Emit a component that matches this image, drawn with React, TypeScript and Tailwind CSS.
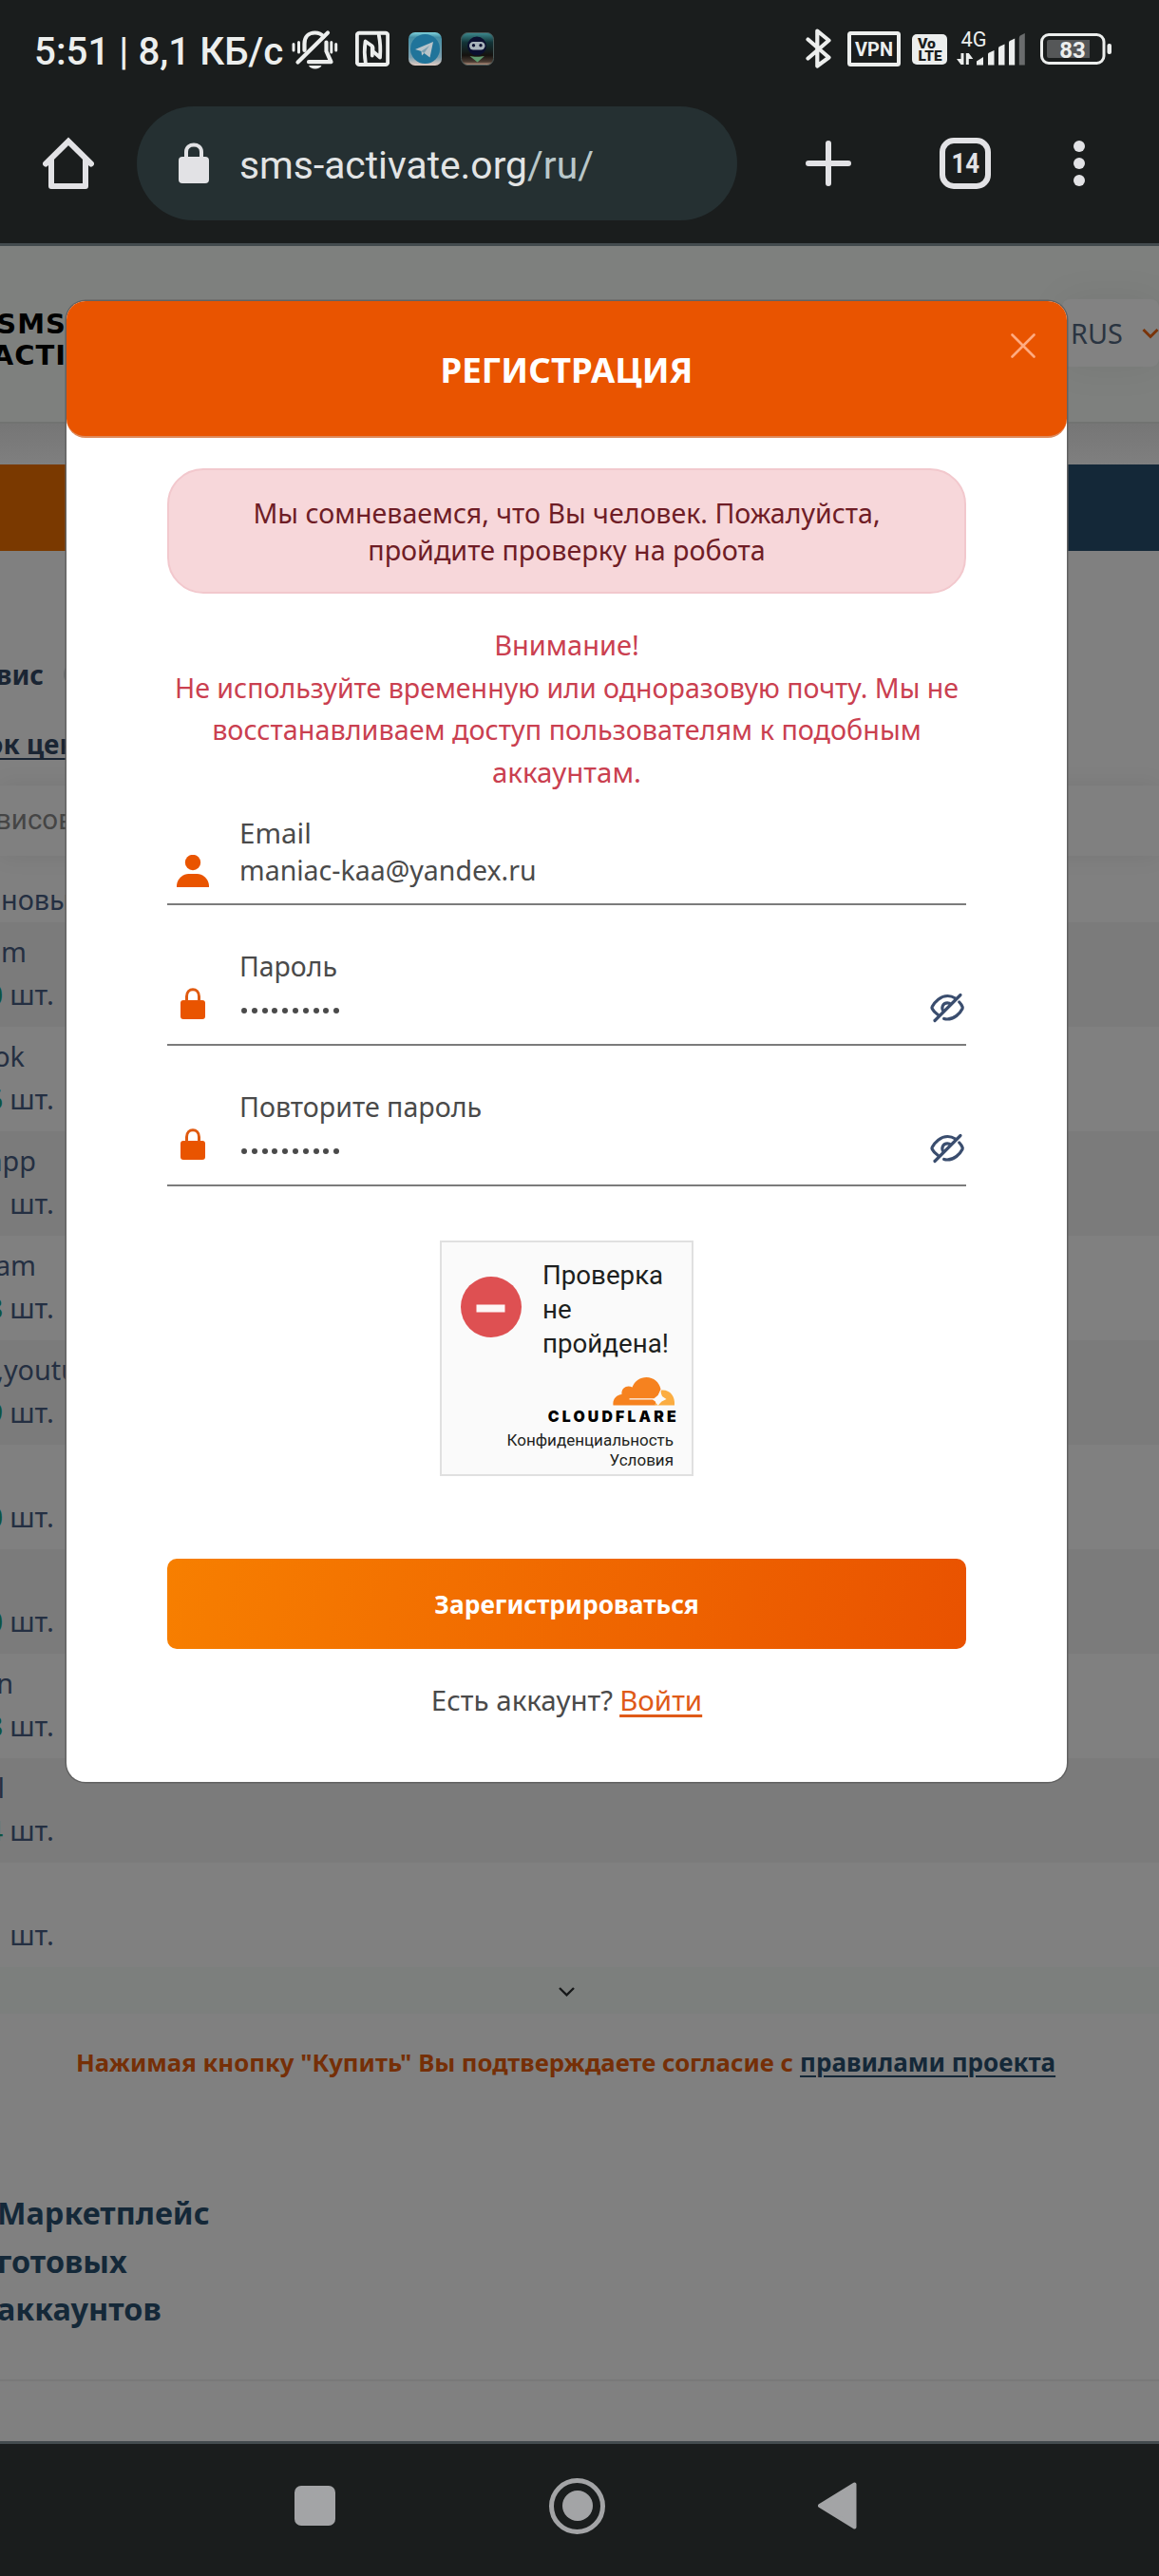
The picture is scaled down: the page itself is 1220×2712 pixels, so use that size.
import React from "react";

const noto = "font-['Noto_Sans',sans-serif]";
const roboto = "font-['Roboto',sans-serif]";

function StatusBar() {
  return (
    <div className="flex h-[104px] items-center pl-[36px] pr-[50px] text-[#eceeed]">
      <div className={`${roboto} w-[271px] whitespace-nowrap text-[40.3px] font-medium leading-[44px]`}>
        <div className="translate-y-[3px]">5:51 | 8,1 КБ/с</div>
      </div>
      <svg className="h-[44px] w-[49px]" viewBox="307 30 49 44" fill="none" stroke="#eceeed" strokeWidth="4.2" strokeLinecap="round" strokeLinejoin="round">
        <path d="M320.5 53V46C320.5 38.5 325 34.5 331.5 34.5C335.500 34.5 338.500 36 340.500 38.5" />
        <path d="M343.500 44.500V54L348.500 65.2H325" />
        <path d="M313.500 65.500L345 34.500" />
        <path d="M309 46.500V53M314.500 44.500V55M348.800 44.500V55M353.700 46.500V53" strokeWidth="3" />
        <path d="M325 69H338.500C337 73.500 326.500 73.500 325 69Z" fill="#eceeed" stroke="none" />
      </svg>
      <svg className="ml-[18px] h-[44px] w-[36px]" viewBox="374 30 36 44" fill="none" stroke="#eceeed" strokeWidth="4" strokeLinejoin="round" strokeLinecap="round">
        <rect x="375.800" y="34.800" width="32.400" height="33.200" rx="2.500" />
        <path d="M384.800 66C383.400 58 383.600 50 384.600 43.500L391.800 48.500V58.500" strokeWidth="3.800" />
        <path d="M398.800 37C400.500 45 400.600 53 400 60.500L392.500 54V50" strokeWidth="3.800" />
      </svg>
      <svg className="ml-[20px] h-[44px] w-[35px]" viewBox="430 30 35 44">
        <defs>
          <linearGradient id="tg" x1="0" y1="0" x2="0" y2="1">
            <stop offset="0" stopColor="#7fd3de" />
            <stop offset="0.15" stopColor="#438fa5" />
            <stop offset="0.75" stopColor="#7b9fae" />
            <stop offset="1" stopColor="#e2cdc4" />
          </linearGradient>
        </defs>
        <rect x="430" y="34" width="35" height="35" rx="7" fill="url(#tg)" />
        <circle cx="447.500" cy="51.500" r="15.500" fill="#20749a" />
        <path d="M437 52L456 44L452.500 60.500L446.500 56L444 58.500L443.500 54Z" fill="#b9c4c9" />
        <path d="M443.500 54L452 48L446.500 56" fill="#7b9fb0" />
      </svg>
      <svg className="ml-[20px] h-[44px] w-[35px]" viewBox="485 30 35 44">
        <defs>
          <linearGradient id="bot" x1="0" y1="0" x2="0" y2="1">
            <stop offset="0" stopColor="#3d8b90" />
            <stop offset="0.3" stopColor="#123337" />
            <stop offset="0.7" stopColor="#15120f" />
            <stop offset="0.9" stopColor="#4a3b32" />
            <stop offset="1" stopColor="#c9a48f" />
          </linearGradient>
        </defs>
        <rect x="485.500" y="34.500" width="34" height="34" rx="7" fill="url(#bot)" stroke="#4a5a59" />
        <circle cx="502" cy="48.500" r="10" fill="#0b1030" />
        <rect x="494" y="44" width="16.500" height="8.500" rx="4.200" fill="#a9b4bb" />
        <circle cx="498.500" cy="47.800" r="1.700" fill="#0b1030" />
        <circle cx="506" cy="47.800" r="1.700" fill="#0b1030" />
        <path d="M494.500 59C498 60 506 60 510 59L502.500 65.500Z" fill="#5f9a6e" />
      </svg>

      <svg className="ml-auto h-[44px] w-[27px]" viewBox="848 30 27 44" fill="none" stroke="#eceeed" strokeWidth="4.200" strokeLinejoin="round" strokeLinecap="round">
        <path d="M850.500 41.500L872.500 60.500L860.300 69.500V32.500L872.500 42.500L850.500 61.500" />
      </svg>
      <svg className="ml-[17px] h-[44px] w-[56px]" viewBox="892 30 56 44">
        <rect x="894" y="35" width="52" height="33" rx="1.500" fill="none" stroke="#eceeed" strokeWidth="4" />
        <text x="920" y="58.800" textAnchor="middle" fontFamily="Roboto" fontWeight="700" fontSize="20.500" fill="#eceeed" textLength="40" lengthAdjust="spacingAndGlyphs">VPN</text>
      </svg>
      <svg className="ml-[12px] h-[44px] w-[37px]" viewBox="960 30 37 44">
        <rect x="960" y="36" width="37" height="32" rx="5" fill="#eceeed" />
        <text x="966" y="50.500" fontFamily="Roboto" fontWeight="900" fontSize="14" fill="#1a1d1d" textLength="19" lengthAdjust="spacingAndGlyphs">Vo</text>
        <text x="966.500" y="64" fontFamily="Roboto" fontWeight="900" fontSize="14" fill="#1a1d1d" textLength="25" lengthAdjust="spacingAndGlyphs">LTE</text>
      </svg>
      <svg className="ml-[10px] h-[44px] w-[72px]" viewBox="1007 30 72 44" fill="#eceeed">
        <text x="1011.500" y="49.300" fontFamily="Roboto" fontSize="22" textLength="27" lengthAdjust="spacingAndGlyphs">4G</text>
        <path d="M1011.500 56h3v12h-3l-4.500-6h4.500zM1016.800 56h3l4.500 6h-4.500v6h-3z" />
        <path d="M1028 64.500l7-4.500v8.500h-7zM1040 57q0-1 1-1.500l5.500-2.500v15.500h-6.500zM1051 51q0-1.500 1-2l5.500-2.500v22h-6.500zM1062 45q0-1.500 1-2l5.200-2.500v28h-6.200z" />
        <path d="M1072.800 40q0-1.500 1-2.500l5-2.500v33.500h-6z" fill="#6a6c6d" />
      </svg>
      <svg className="ml-[16px] h-[44px] w-[75px]" viewBox="1095 30 75 44">
        <rect x="1096.500" y="36.500" width="65.500" height="30" rx="7.500" fill="none" stroke="#eceeed" strokeWidth="3" />
        <path d="M1102 44q0-2 2-2h43v19h-43q-2 0-2-2z" fill="#555758" />
        <rect x="1165.500" y="46" width="4.500" height="11" rx="2" fill="#eceeed" />
        <text x="1129" y="61.300" textAnchor="middle" fontFamily="Roboto" fontWeight="700" fontSize="24" fill="#eceeed" textLength="27.500" lengthAdjust="spacingAndGlyphs">83</text>
      </svg>
    </div>
  );
}

function Toolbar() {
  return (
    <div className="flex h-[152px] items-center pb-[16px] pl-[45px] pr-[78px]">
      <svg className="h-[56px] w-[54px]" viewBox="45 144 54 56" fill="none" stroke="#e2e2e5" strokeWidth="6" strokeLinejoin="round" strokeLinecap="round">
        <path d="M48 172.500L72 148.800L96 172.500" strokeLinejoin="miter" />
        <path d="M54 168V196H90V168" />
      </svg>
      <div className="ml-[45px] flex h-[120px] w-[632px] items-center rounded-full bg-[#253032] pl-[44px]">
        <svg className="h-[44px] w-[32px]" viewBox="188 149 32 44">
          <rect x="188" y="164" width="32" height="28" rx="4" fill="#e2e2e5" />
          <path d="M196 165V159C196 149 212 149 212 159V165" fill="none" stroke="#e2e2e5" strokeWidth="4" />
        </svg>
        <div className={`${roboto} ml-[32px] whitespace-nowrap text-[40.8px] leading-[48px] text-[#e2e4e5]`}>
          <div className="translate-y-[2px]">sms-activate.org<span className="text-[#b9c7c9]">/ru/</span></div>
        </div>
      </div>
      <svg className="ml-[72px] h-[48px] w-[48px]" viewBox="0 0 48 48" stroke="#e2e2e5" strokeWidth="6" strokeLinecap="round">
        <path d="M24 3V45M3 24H45" />
      </svg>
      <div className={`${roboto} ml-[93px] flex h-[54px] w-[54px] items-center justify-center rounded-[15px] border-[6px] border-[#e2e2e5] text-[30px] font-bold leading-none text-[#e2e2e5]`}>
        <span className="scale-x-[0.86]">14</span>
      </div>
      <svg className="ml-[87px] h-[48px] w-[12px]" viewBox="0 0 12 48" fill="#e2e2e5">
        <circle cx="6" cy="6" r="6" /><circle cx="6" cy="24" r="6" /><circle cx="6" cy="42" r="6" />
      </svg>
    </div>
  );
}

const rows = [
  { name: "m", nameEnd: "w-[28px]", count: "0" },
  { name: "ok", nameEnd: "w-[26px]", count: "6" },
  { name: "app", nameEnd: "w-[38px]", count: "" },
  { name: "am", nameEnd: "w-[38px]", count: "8" },
  { name: ",youtu", nameEnd: "w-[82px]", count: "9" },
  { name: "", nameEnd: "w-0", count: "0" },
  { name: "", nameEnd: "w-0", count: "0" },
  { name: "n", nameEnd: "w-[14px]", count: "8" },
  { name: "l", nameEnd: "w-[5px]", count: "4" },
  { name: "", nameEnd: "w-0", count: "" },
];

function PageBehind() {
  return (
    <div className={`${noto} text-[#242f42]`}>
      <div className="flex h-[185px] justify-between bg-[#7e807e] pt-[56px]">
        <div className="mt-[10px] flex w-[70px] flex-col items-end font-['DejaVu_Sans',sans-serif] text-[29px] font-bold leading-[32.500px] text-black">
          <div className="tracking-[1px]">SMS</div>
          <div className="tracking-[1px]">ACTI</div>
        </div>
        <div className="flex h-[71px] w-[102px] items-center rounded-[8px] bg-[#828282] pl-[9px] shadow-[0_0_40px_rgba(0,0,0,0.07)]">
          <span className="w-[76px] text-[28.800px] text-[#2a3441]">RUS</span>
          <svg className="h-[12px] w-[18px] shrink-0" viewBox="0 0 18 12" fill="none" stroke="#7a340a" strokeWidth="3">
            <path d="M1.500 2L9 9.500L16.500 2" />
          </svg>
        </div>
      </div>
      <div className="h-[45px] border-t-2 border-[#717371] bg-gradient-to-b from-[#767676] to-[#7f7f7f]" />
      <div className="flex h-[91px]">
        <div className="w-1/2 bg-[#7a3900]" />
        <div className="w-1/2 bg-[#142838]" />
      </div>
      <div className="h-[247px] pt-[110px] text-[28px] font-bold leading-[40px] text-[#1a2533]">
        <div className="flex items-center">
          <div className="flex w-[46px] justify-end">вис</div>
          <div className="ml-[21px] h-[26px] w-[26px] rounded-full border-2 border-[#6a6c6e]" />
        </div>
        <div className="-ml-[14px] mt-[33px] underline decoration-2 underline-offset-4">ок цен</div>
      </div>
      <div className={`${roboto} h-[74px] whitespace-nowrap bg-[#808080] text-[29.500px] leading-[73px] text-[#454545] shadow-[0_0_24px_rgba(0,0,0,0.08)]`}>
        <div className="-ml-[5px]">висов</div>
      </div>
      <div className="h-[70px] pl-[1px] pt-[26px] text-[28.800px] leading-[40px]">новы</div>
      {rows.map((row, i) => (
        <div key={i} className={`h-[110px] pt-[8px] text-[28.800px] leading-[45px] ${i % 2 === 0 ? "bg-[#7b7b7b]" : "bg-[#808080]"}`}>
          <div className={`flex h-[45px] justify-end ${row.nameEnd}`}>{row.name}</div>
          <div className="flex w-[57px] justify-end gap-[7px]">
            <span className="text-[#0c5341]">{row.count}</span>
            <span className="text-[29.500px]">шт.</span>
          </div>
        </div>
      ))}
      <div className="flex h-[49px] items-center bg-[#7c7f7d] pl-[588px] pt-[2px]">
        <svg className="h-[10px] w-[17px]" viewBox="0 0 17 10" fill="none" stroke="#161819" strokeWidth="2.400">
          <path d="M1 1L8.500 8.300L16 1" />
        </svg>
      </div>
      <div className="flex h-[184px] gap-[7px] whitespace-nowrap pl-[80px] pt-[31px] font-bold leading-[40px]">
        <span className="text-[25.750px] text-[#752f07]">Нажимая кнопку "Купить" Вы подтверждаете согласие с</span>
        <span className="text-[26px] text-[#142838] underline decoration-2 underline-offset-4">правилами проекта</span>
      </div>
      <div className="-ml-[3px] h-[201px] text-[32.400px] font-bold leading-[50.500px] text-[#142838]">
        <div>Маркетплейс</div>
        <div>готовых</div>
        <div>аккаунтов</div>
      </div>
      <div className="h-[66px] border-t-2 border-[#797979]" />
    </div>
  );
}

function LockIcon() {
  return (
    <svg className="mt-[87px] ml-[14px] h-[33px] w-[26px]" viewBox="0 0 26 33">
      <rect x="0" y="13" width="26" height="20" rx="3" fill="#e95400" />
      <path d="M6.500 14V9C6.500 -0.800 19.500 -0.800 19.500 9V14" fill="none" stroke="#e05a10" strokeWidth="3" />
    </svg>
  );
}

function PasswordField({ label, size }: { label: string; size: string }) {
  return (
    <div className="flex h-[148px] border-b-2 border-[#7b7b7b]">
      <div className="w-[76px]"><LockIcon /></div>
      <div className="flex-1 pt-[44px]">
        <div className={`${size} leading-[40px]`}>{label}</div>
        <div className="ml-[2px] mt-[24px] flex gap-[4.800px]">
          {Array.from({ length: 10 }, (_, i) => (
            <span key={i} className="h-[6px] w-[6px] rounded-full bg-[#4a4a4a]" />
          ))}
        </div>
      </div>
      <svg className="mr-[2px] mt-[92px] h-[32px] w-[36px]" viewBox="0 0 36 32" fill="none" stroke="#3a4d6e" strokeWidth="3.200" strokeLinecap="round" strokeLinejoin="round">
        <path d="M8.500 23.500C5.500 21.500 3.300 19 2.300 17C1.900 16.200 1.900 15.500 2.300 14.800C5 9.500 11 3.500 18.500 3.500C21.500 3.500 24.300 4.500 26.700 6" />
        <path d="M30.800 10C32.300 11.600 33.300 13.200 34 14.800C34.300 15.500 34.300 16.200 34 17C31.500 22 25.500 28 18 28C16.800 28 15.700 27.800 14.700 27.500" />
        <path d="M14.200 19.500C11.300 16 13.500 10.800 18.200 10.800C19.500 10.800 20.800 11.300 21.700 12.200" />
        <path d="M32 2.500L5 29.500" />
      </svg>
    </div>
  );
}

function Captcha() {
  return (
    <div className={`${roboto} ml-[287px] mt-[57px] h-[248px] w-[267px] border-2 border-[#e0e0e0] bg-[#fafafa] text-[#1d1f20]`}>
      <div className="flex h-[142px] pl-[20px]">
        <svg className="mt-[36px] h-[64px] w-[64px]" viewBox="0 0 64 64">
          <circle cx="32" cy="32" r="32" fill="#de5052" />
          <rect x="16.500" y="29.500" width="30" height="8" fill="#fdf6f6" />
        </svg>
        <div className="ml-[22px] pt-[17px] text-[27.700px] leading-[36px]">
          <div>Проверка</div>
          <div>не</div>
          <div>пройдена!</div>
        </div>
      </div>
      <div className="flex flex-col items-end pr-[17px]">
        <svg className="h-[30px] w-[66px]" viewBox="0 0 66 30">
          <path d="M0.500 29.500C-0.500 23 4 18.500 9.500 18C8.500 12 14.500 7.500 20.500 10.500C23 4 29 0 35.500 0C43 0 49 5 50.500 12.500L46.500 22.500L44.500 29.500Z" fill="#f6821f" />
          <path d="M51 13.500C59.500 12.500 66 19 65 29.500H44L49 22Z" fill="#fbad41" />
          <path d="M17.500 22.300H43.500L47.500 19L50 14.500L52 20L56.500 23L51.500 25.500L47.500 29.800L44.800 25.500L42 23.500H17.500Z" fill="#fafafa" />
        </svg>
        <div className="-mr-[4px] mt-[2px] font-['Inter',sans-serif] text-[15.800px] font-black leading-[20px] tracking-[3.200px] text-black">CLOUDFLARE</div>
        <div className="mr-[2px] mt-[4px] text-[17px] leading-[20.700px]">Конфиденциальность</div>
        <div className="mr-[2px] text-[17px] leading-[20.700px]">Условия</div>
      </div>
    </div>
  );
}

function Modal() {
  return (
    <div className={`${noto} absolute left-[70px] top-[317px] h-[1559px] w-[1053px] rounded-[20px] bg-white text-[#4a4a4a] shadow-[0_0_0_1.500px_#626262]`}>
      <div className="relative flex h-[144px] items-center justify-center rounded-[20px] border-b-2 border-[#dd8a5c] bg-[#e95400]">
        <h1 className="pt-[2px] text-[36.600px] font-bold leading-[50px] text-white">РЕГИСТРАЦИЯ</h1>
        <svg className="absolute right-[33px] top-[34px] h-[26px] w-[26px]" viewBox="0 0 26 26" stroke="#ffab80" strokeWidth="2.600" strokeLinecap="round">
          <path d="M1.500 1.500L24.500 24.500M24.500 1.500L1.500 24.500" />
        </svg>
      </div>
      <div className="px-[106px]">
        <div className="mt-[32px] h-[132px] rounded-[38px] border-2 border-[#f2c8cd] bg-[#f7d7da] pt-[25px] text-center leading-[39px] text-[#6f1d26]">
          <div className="text-[28.550px]">Мы сомневаемся, что Вы человек. Пожалуйста,</div>
          <div className="text-[28.700px]">пройдите проверку на робота</div>
        </div>
        <div className="mt-[32px] h-[177px] whitespace-nowrap text-center leading-[44.500px] text-[#ca4050]">
          <div className="text-[29px]">Внимание!</div>
          <div className="text-[28.550px]">Не используйте временную или одноразовую почту. Мы не</div>
          <div className="text-[28.750px]">восстанавливаем доступ пользователям к подобным</div>
          <div className="text-[29.500px]">аккаунтам.</div>
        </div>
        <div className="flex h-[119px] border-b-2 border-[#7b7b7b]">
          <div className="w-[76px]">
            <svg className="ml-[10px] mt-[66px] h-[34px] w-[34px]" viewBox="0 0 34 34" fill="#e95400">
              <circle cx="17" cy="8" r="8.200" />
              <path d="M0 34C-0.500 25 7 20 12.500 20H21.500C27 20 34.500 25 34 34Z" />
            </svg>
          </div>
          <div className="pt-[23px] leading-[39.500px]">
            <div className="text-[29.500px]">Email</div>
            <div className="text-[28.500px]">maniac-kaa@yandex.ru</div>
          </div>
        </div>
        <PasswordField label="Пароль" size="text-[28.400px]" />
        <PasswordField label="Повторите пароль" size="text-[28.600px]" />
        <Captcha />
        <button className="mt-[87px] flex h-[95px] w-full items-center justify-center rounded-[10px] bg-[linear-gradient(105deg,#f77f00,#e95200)] pt-[2px] text-[26.400px] font-bold text-white">
          Зарегистрироваться
        </button>
        <div className="mt-[34px] flex justify-center gap-[7px] text-[29.500px] leading-[40px]">
          <span>Есть аккаунт?</span>
          <a className="text-[#df5a18] underline decoration-[2.500px] underline-offset-[4px]">Войти</a>
        </div>
      </div>
    </div>
  );
}

export default function App() {
  return (
    <div className="relative flex h-[2712px] w-[1220px] flex-col overflow-hidden bg-[#808080]">
      <div className="h-[259px] shrink-0 border-b-[3px] border-[#434b4e] bg-[#1a1d1d]">
        <StatusBar />
        <Toolbar />
      </div>
      <div className="h-[2311px] shrink-0 overflow-hidden">
        <PageBehind />
      </div>
      <div className="flex h-[142px] shrink-0 items-center border-t-[3px] border-[#434b4e] bg-[#1a1d1d] pb-[9px] pl-[310px]">
        <div className="h-[42px] w-[43px] rounded-[7px] bg-[#a3a4a6]" />
        <div className="ml-[225px] flex h-[59px] w-[59px] items-center justify-center rounded-full border-[5px] border-[#a3a4a6]">
          <div className="h-[32px] w-[32px] rounded-full bg-[#a3a4a6]" />
        </div>
        <svg className="ml-[224px] h-[50px] w-[41px]" viewBox="0 0 41 50" fill="#a3a4a6" stroke="#a3a4a6" strokeWidth="4" strokeLinejoin="round">
          <path d="M2 25L38.500 2.500V47.500Z" />
        </svg>
      </div>
      <Modal />
    </div>
  );
}
